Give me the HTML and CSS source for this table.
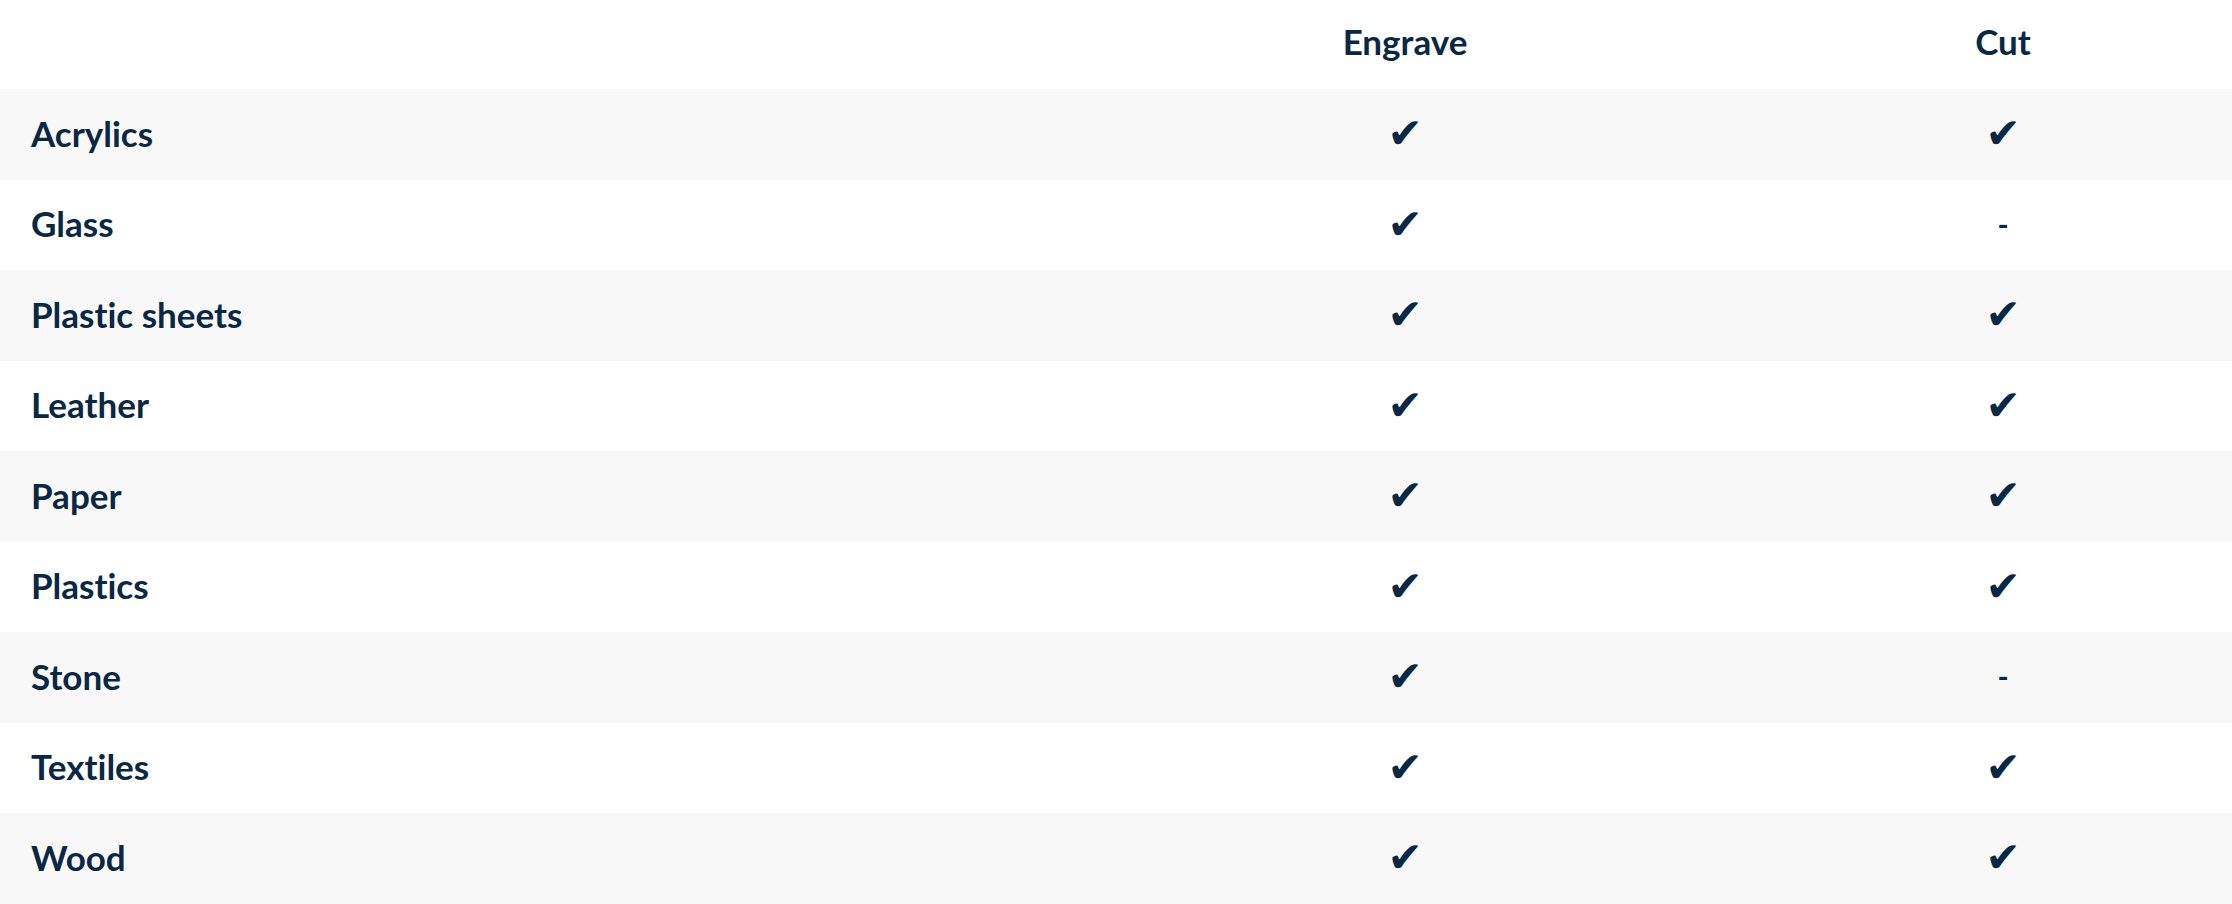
FILE: index.html
```html
<!DOCTYPE html>
<html lang="en">
<head>
<meta charset="utf-8">
<title>Materials</title>
<link rel="stylesheet" href="styles.css">
</head>
<body>
<div class="table">
  <div class="row head">
    <div class="cell label"></div>
    <div class="cell mid">Engrave</div>
    <div class="cell mid">Cut</div>
  </div>
  <div class="row alt"><div class="cell label">Acrylics</div><div class="cell mid check">✔</div><div class="cell mid check">✔</div></div>
  <div class="row"><div class="cell label">Glass</div><div class="cell mid check">✔</div><div class="cell mid dash">-</div></div>
  <div class="row alt"><div class="cell label">Plastic sheets</div><div class="cell mid check">✔</div><div class="cell mid check">✔</div></div>
  <div class="row"><div class="cell label">Leather</div><div class="cell mid check">✔</div><div class="cell mid check">✔</div></div>
  <div class="row alt"><div class="cell label">Paper</div><div class="cell mid check">✔</div><div class="cell mid check">✔</div></div>
  <div class="row"><div class="cell label">Plastics</div><div class="cell mid check">✔</div><div class="cell mid check">✔</div></div>
  <div class="row alt"><div class="cell label">Stone</div><div class="cell mid check">✔</div><div class="cell mid dash">-</div></div>
  <div class="row"><div class="cell label">Textiles</div><div class="cell mid check">✔</div><div class="cell mid check">✔</div></div>
  <div class="row alt"><div class="cell label">Wood</div><div class="cell mid check">✔</div><div class="cell mid check">✔</div></div>
</div>
</body>
</html>
```
FILE: styles.css
```css
html, body {
  margin: 0;
  padding: 0;
  background: #ffffff;
}
body {
  font-family: "Lato", "Noto Sans", sans-serif;
  font-weight: 700;
  color: #0b2742;
  font-variant-ligatures: none;
  font-feature-settings: "liga" 0, "clig" 0;
}
.table {
  display: flex;
  flex-direction: column;
  width: 2232px;
}
.row {
  display: grid;
  grid-template-columns: 1036px 738px 458px;
  height: 90.5px;
  align-items: center;
}
.row.head {
  height: 89px;
  align-items: start;
}
.row.alt {
  background: #f8f8f8;
}
.cell {
  font-size: 35px;
  line-height: 44px;
}
.head .cell {
  padding-top: 19px;
}
.label {
  padding-left: 31px;
  margin-bottom: 3px;
}
.mid {
  text-align: center;
}
.check {
  font-family: "DejaVu Sans", sans-serif;
  font-weight: 700;
  font-size: 42px;
}
.dash {
  font-size: 30px;
  font-weight: 700;
  margin-bottom: 2px;
}
```
